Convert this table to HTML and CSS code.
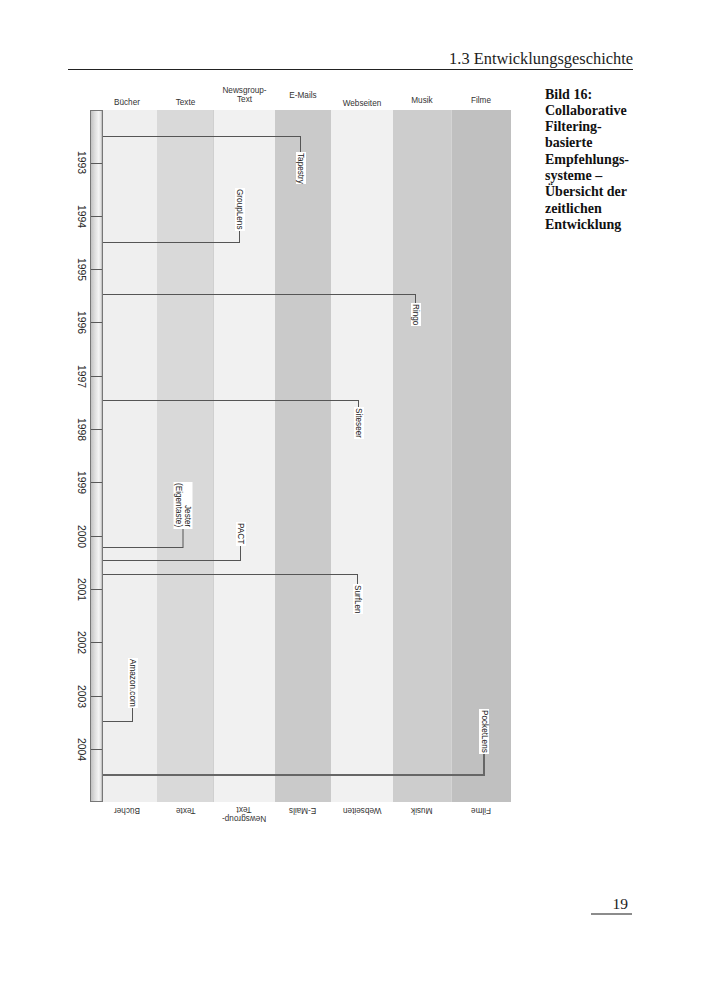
FILE: index.html
```html
<!DOCTYPE html>
<html lang="de">
<head>
<meta charset="utf-8">
<title>1.3 Entwicklungsgeschichte</title>
<link rel="stylesheet" href="styles.css">
</head>
<body>
<div class="page">
  <header class="running-head"><span>1.3 Entwicklungsgeschichte</span></header>

  <main class="spread">
    <figure class="chart">
      <div class="lanes-head">
        <div class="hlab h-buecher">Bücher</div>
        <div class="hlab h-texte">Texte</div>
        <div class="hlab h-news">Newsgroup-<br>Text</div>
        <div class="hlab h-mails">E-Mails</div>
        <div class="hlab h-web">Webseiten</div>
        <div class="hlab h-musik">Musik</div>
        <div class="hlab h-filme">Filme</div>
      </div>

      <div class="axis">
        <div class="years">
          <div class="year"><span>1993</span></div>
          <div class="year"><span>1994</span></div>
          <div class="year"><span>1995</span></div>
          <div class="year"><span>1996</span></div>
          <div class="year"><span>1997</span></div>
          <div class="year"><span>1998</span></div>
          <div class="year"><span>1999</span></div>
          <div class="year"><span>2000</span></div>
          <div class="year"><span>2001</span></div>
          <div class="year"><span>2002</span></div>
          <div class="year"><span>2003</span></div>
          <div class="year"><span>2004</span></div>
        </div>
        <div class="bar">
          <div class="bar-lead"></div>
          <div class="tick"></div><div class="tick"></div><div class="tick"></div>
          <div class="tick"></div><div class="tick"></div><div class="tick"></div>
          <div class="tick"></div><div class="tick"></div><div class="tick"></div>
          <div class="tick"></div><div class="tick"></div><div class="tick"></div>
        </div>
      </div>

      <div class="plot">
        <div class="lane lane-buecher"></div>
        <div class="lane lane-texte"></div>
        <div class="lane lane-news"></div>
        <div class="lane lane-mails"></div>
        <div class="lane lane-web"></div>
        <div class="lane lane-musik"></div>
        <div class="lane lane-filme"></div>

        <div class="event down" style="top:26px;width:198px;--stem:16px"><div class="drop"><i class="stem"></i><span class="tag">Tapestry</span></div></div>
        <div class="event up" style="top:132px;width:137px;--stem:12px"><div class="drop"><i class="stem"></i><span class="tag">GroupLens</span></div></div>
        <div class="event down" style="top:184px;width:313px;--stem:9px"><div class="drop"><i class="stem"></i><span class="tag">Ringo</span></div></div>
        <div class="event down" style="top:290px;width:256px;--stem:7px"><div class="drop"><i class="stem"></i><span class="tag">Siteseer</span></div></div>
        <div class="event up" style="top:437px;width:80px;--stem:19px"><div class="drop"><i class="stem"></i><span class="tag">Jester<br>(Eigentaste)</span></div></div>
        <div class="event up" style="top:450px;width:138px;--stem:15px"><div class="drop"><i class="stem"></i><span class="tag">PACT</span></div></div>
        <div class="event down" style="top:464px;width:255px;--stem:10px"><div class="drop"><i class="stem"></i><span class="tag">SurfLen</span></div></div>
        <div class="event up" style="top:611px;width:30px;--stem:14px"><div class="drop"><i class="stem"></i><span class="tag">Amazon.com</span></div></div>
        <div class="event up thick" style="top:664px;width:382px;--stem:22px"><div class="drop"><i class="stem"></i><span class="tag">PocketLens</span></div></div>
      </div>

      <div class="lanes-foot">
        <div class="flab f-buecher"><span>Bücher</span></div>
        <div class="flab"><span>Texte</span></div>
        <div class="flab"><span>Newsgroup-<br>Text</span></div>
        <div class="flab"><span>E-Mails</span></div>
        <div class="flab"><span>Webseiten</span></div>
        <div class="flab"><span>Musik</span></div>
        <div class="flab"><span>Filme</span></div>
      </div>
    </figure>

    <aside class="caption">Bild 16:<br>Collaborative<br>Filtering-<br>basierte<br>Empfehlungs-<br>systeme –<br>Übersicht der<br>zeitlichen<br>Entwicklung</aside>
  </main>

  <footer class="folio"><span class="folio-num">19</span></footer>
</div>
</body>
</html>
```

FILE: styles.css
```css
* { box-sizing: border-box; }

html, body {
  margin: 0;
  padding: 0;
  background: #ffffff;
}

.page {
  width: 708px;
  padding-left: 68px;
  padding-right: 75px;
  color: #1a1a1a;
}

/* running head */
.running-head {
  padding-top: 50px;
  text-align: right;
  font-family: "Liberation Serif", "DejaVu Serif", serif;
  font-size: 16.4px;
  line-height: 18.5px;
  border-bottom: 1.5px solid #222;
  color: #1c1c1c;
}

/* main row */
.spread {
  display: flex;
  align-items: flex-start;
}

.chart {
  margin: 0;
  width: 443px;
  display: grid;
  grid-template-columns: 35px 408px;
  grid-template-rows: 40px 692px 30px;
  --lanes: 54px 57px 61px 56px 62px 58px 60px;
  font-family: "Liberation Sans", Arial, sans-serif;
}

/* column labels on top */
.lanes-head {
  grid-column: 2;
  grid-row: 1;
  display: grid;
  grid-template-columns: var(--lanes);
}

.hlab {
  display: flex;
  align-items: flex-end;
  justify-content: center;
  text-align: center;
  font-size: 8.2px;
  line-height: 9px;
  color: #333;
  padding-bottom: 2.8px;
}

.h-buecher { padding-right: 6px; }
.h-news { line-height: 8.7px; padding-bottom: 5.2px; }
.h-mails { padding-bottom: 9.6px; }
.h-web { padding-bottom: 2px; }
.h-musik, .h-filme { padding-bottom: 4.5px; }

/* time axis */
.axis {
  grid-column: 1;
  grid-row: 2;
  display: flex;
}

.years {
  width: 22px;
  display: flex;
  flex-direction: column;
  padding-top: 26.8px;
}

.year {
  height: 53.33px;
  flex: none;
  display: flex;
  align-items: center;
  justify-content: flex-end;
  padding-right: 4px;
}

.year span {
  writing-mode: vertical-rl;
  font-size: 10.4px;
  line-height: 10px;
  color: #262626;
}

.bar {
  width: 13px;
  height: 692px;
  border: 1px solid #777;
  background: linear-gradient(to right, #c2c2c2 0%, #dedede 35%, #f4f4f4 70%, #e2e2e2 88%, #b4b4b4 100%);
  overflow: hidden;
  display: flex;
  flex-direction: column;
}

.bar-lead {
  height: 52px;
  flex: none;
}

.tick {
  height: 53.33px;
  flex: none;
  border-top: 1px solid #5a5a5a;
}

/* plot with lanes */
.plot {
  grid-column: 2;
  grid-row: 2;
  position: relative;
  display: grid;
  grid-template-columns: var(--lanes);
}

.lane-buecher { background: #efefef; }
.lane-texte   { background: #d9d9d9; border-right: 1px solid #d0d0d0; }
.lane-news    { background: #f1f1f1; }
.lane-mails   { background: #cacaca; }
.lane-web     { background: #f1f1f1; }
.lane-musik   { background: #cdcdcd; }
.lane-filme   { background: #c0c0c0; border-left: 1px solid #d4d4d4; }

/* events: position on the canvas is the data (year, category) */
.event {
  position: absolute;
  left: 0;
  height: 0;
  border-top: 1px solid #555;
}

.event.thick { border-top: 2px solid #666; }

.drop {
  position: absolute;
  left: calc(100% - 0.5px);
  transform: translateX(-50%);
  display: flex;
  flex-direction: column;
  align-items: center;
}

.event.down .drop { top: -1px; }
.event.up .drop { bottom: 0; flex-direction: column-reverse; }
.event.thick .drop { left: calc(100% - 1px); }

.stem {
  display: block;
  width: 1px;
  height: var(--stem);
  background: #555;
}

.event.thick .stem { width: 2px; background: #666; }

.tag {
  writing-mode: vertical-rl;
  font-size: 8.2px;
  line-height: 9px;
  color: #222;
  background: #ffffff;
  padding: 1px 0.5px;
  text-align: end;
  white-space: nowrap;
}

/* upside-down labels at the bottom */
.lanes-foot {
  grid-column: 2;
  grid-row: 3;
  display: grid;
  grid-template-columns: var(--lanes);
}

.flab {
  display: flex;
  justify-content: center;
  align-items: flex-start;
  padding-top: 3px;
}

.f-buecher { padding-right: 6px; }

.flab span {
  display: inline-block;
  transform: rotate(180deg);
  font-size: 8.2px;
  line-height: 8.5px;
  text-align: center;
  color: #333;
}

/* caption */
.caption {
  margin-left: 34px;
  margin-top: 17px;
  font-family: "Liberation Serif", "DejaVu Serif", serif;
  font-weight: bold;
  font-size: 14px;
  line-height: 16.3px;
  color: #111;
}

/* folio */
.folio {
  display: flex;
  justify-content: flex-end;
  margin-top: 63px;
  padding-right: 1px;
}

.folio-num {
  width: 41px;
  text-align: right;
  padding-right: 4px;
  padding-bottom: 1px;
  font-family: "Liberation Serif", "DejaVu Serif", serif;
  font-size: 15.5px;
  line-height: 17px;
  border-bottom: 2px solid #8c8c8c;
  color: #1a1a1a;
}
```
